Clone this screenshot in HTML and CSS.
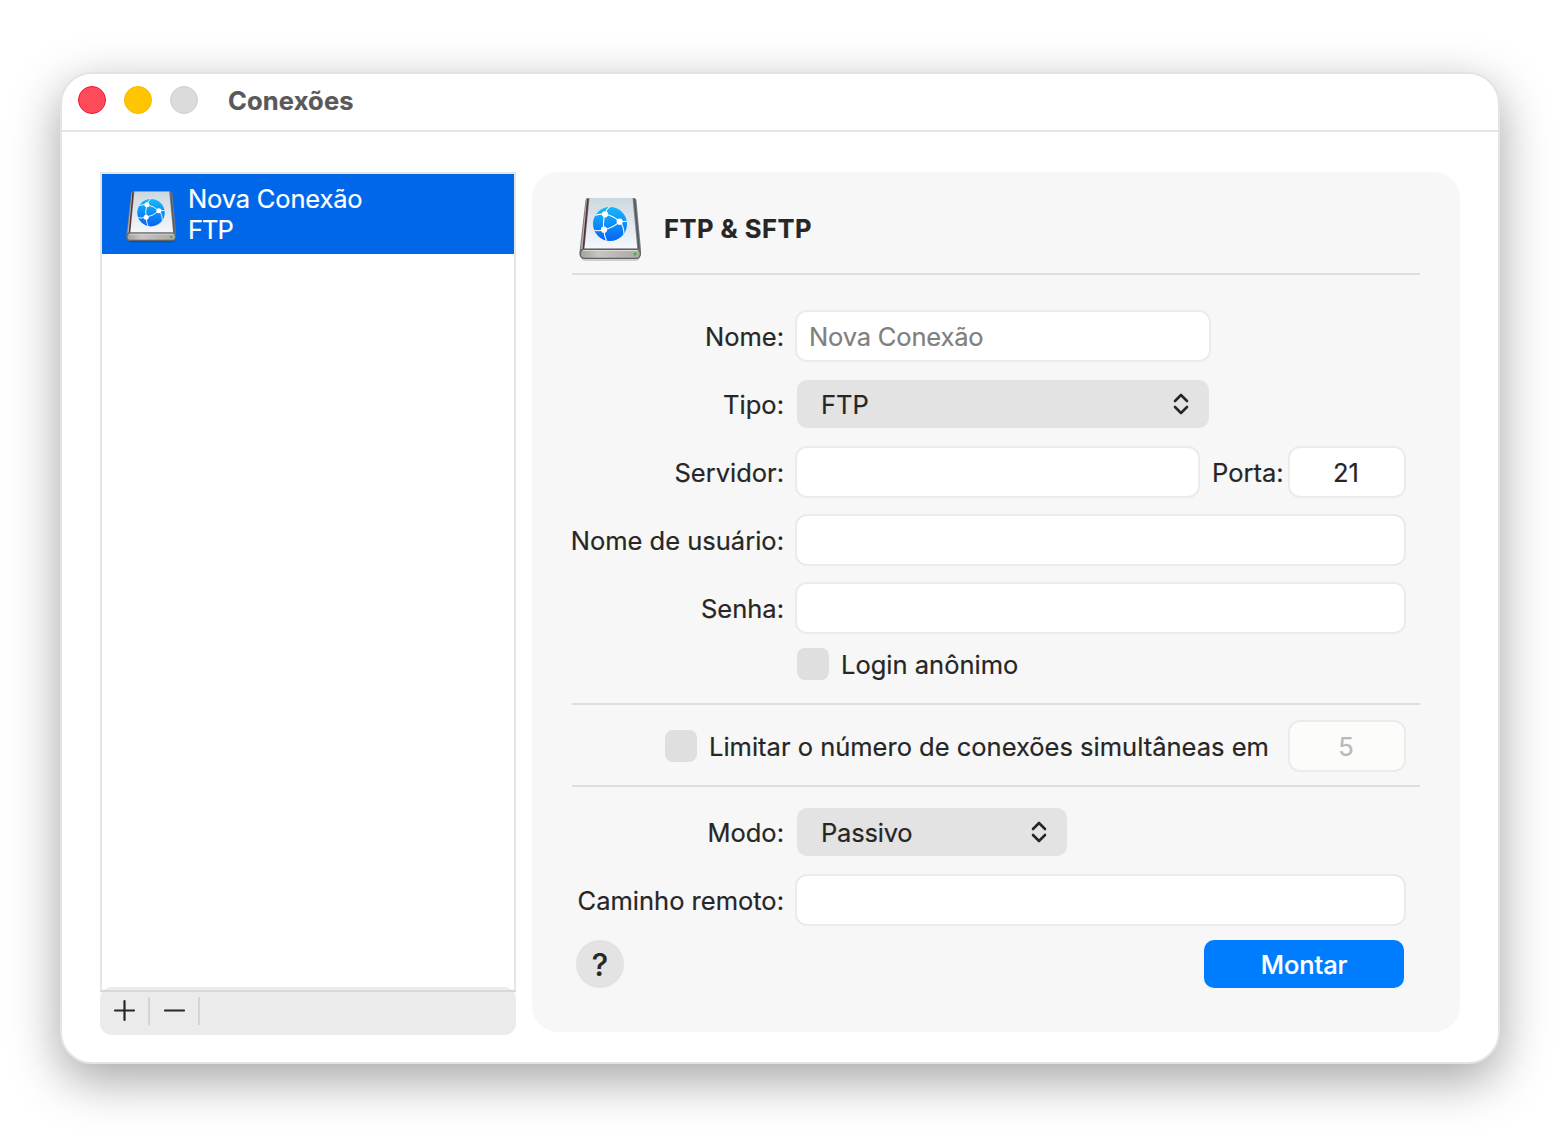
FILE: index.html
```html
<!DOCTYPE html>
<html lang="pt-BR">
<head>
<meta charset="utf-8">
<title>Conexões</title>
<link rel="stylesheet" href="styles.css">
</head>
<body>
<svg class="defs" width="0" height="0" aria-hidden="true">
  <defs>
    <linearGradient id="top" x1="0" y1="0" x2="0" y2="1"><stop offset="0" stop-color="#ccd8df"/><stop offset=".55" stop-color="#e2e9f0"/><stop offset="1" stop-color="#f4f7fb"/></linearGradient>
    <linearGradient id="front" x1="0" y1="0" x2="1" y2="0"><stop offset="0" stop-color="#a3a09d"/><stop offset=".3" stop-color="#c9c5c1"/><stop offset="1" stop-color="#aaa7a4"/></linearGradient>
    <linearGradient id="sea" x1="0" y1="0" x2="0" y2="1"><stop offset="0" stop-color="#16b8fb"/><stop offset="1" stop-color="#0465f4"/></linearGradient>
    <clipPath id="globe"><circle cx="32" cy="28" r="17"/></clipPath>
    <symbol id="disk" viewBox="0 0 64 68">
      <path d="M3 61Q3 65 8 65H57Q62 65 62 61Z" fill="#000" opacity=".16"/>
      <path d="M9.500 2H56Q58 2 58.400 4L63 54Q63 63 58 63H6Q1.500 63 1.500 56L7.500 4Q7.800 2 9.500 2Z" fill="#777c80"/>
      <path d="M8.300 3L3 53L5 53L9.500 3Z" fill="#b8b4b4"/>
      <path d="M9.800 3L5.300 53" stroke="#5b3037" stroke-width="1.600"/>
      <path d="M56.500 3L61 53" stroke="#4f565b" stroke-width="1.300"/>
      <path d="M11.500 2H54.500L59.300 52.500H6.500Z" fill="url(#top)"/>
      <rect x="2.300" y="53.300" width="60" height="9" rx="4" fill="url(#front)" stroke="#5e6265" stroke-width="1.300"/>
      <path d="M5 54.600H60" stroke="#e1dfdc" stroke-width=".9"/>
      <circle cx="57" cy="58" r="1.500" fill="#25c42c"/>
      <circle cx="32" cy="28" r="17" fill="url(#sea)"/>
      <g clip-path="url(#globe)" fill="none" stroke="#fff" stroke-width="1.100">
        <path d="M15 20Q21 17.500 27 18.300Q36 20 41.700 25.700Q46 29 46 39"/>
        <path d="M27 18.300Q28 13 33 10M27 18.300Q24.500 26 26 33.700Q26 40 29 46"/>
        <path d="M50 25.200L41.700 25.700Q35 32 26 33.700Q20 35.500 14 34"/>
      </g>
      <g fill="#fff"><circle cx="27" cy="18.300" r="3.100"/><circle cx="41.700" cy="25.700" r="3.100"/><circle cx="26" cy="33.700" r="3.100"/></g>
    </symbol>
    <symbol id="updown" viewBox="0 0 16 22"><path d="M2 8L8 2L14 8M2 14L8 20L14 14" fill="none" stroke="#262626" stroke-width="2.600" stroke-linecap="round" stroke-linejoin="round"/></symbol>
  </defs>
</svg>
<main class="window">
  <header class="titlebar">
    <span class="light close"></span><span class="light minimize"></span><span class="light zoom"></span>
    <h1 class="title">Conexões</h1>
  </header>
  <div class="content">
    <aside class="sidebar">
      <div class="list">
        <div class="item">
          <svg class="item-icon"><use href="#disk"/></svg>
          <div class="item-text"><div class="item-name">Nova Conexão</div><div class="item-kind">FTP</div></div>
        </div>
      </div>
      <div class="toolbar">
        <button class="tool" aria-label="Adicionar"><svg width="22" height="22" viewBox="0 0 22 22"><path d="M1.500 11H20.500M11 1.500V20.500" stroke="#262626" stroke-width="2.200" stroke-linecap="round"/></svg></button>
        <button class="tool" aria-label="Remover"><svg width="22" height="22" viewBox="0 0 22 22"><path d="M1.500 11H20.500" stroke="#262626" stroke-width="2.200" stroke-linecap="round"/></svg></button>
      </div>
    </aside>
    <section class="panel">
      <div class="panel-head"><svg class="panel-icon"><use href="#disk"/></svg><h2 class="panel-title">FTP &amp; SFTP</h2></div>
      <div class="group account">
        <div class="row"><label class="label">Nome:</label><input class="field name" placeholder="Nova Conexão"></div>
        <div class="row"><label class="label">Tipo:</label><div class="select type"><span>FTP</span><svg class="arrows"><use href="#updown"/></svg></div></div>
        <div class="row"><label class="label">Servidor:</label><input class="field server"><label class="port-label">Porta:</label><input class="field number" value="21"></div>
        <div class="row"><label class="label">Nome de usuário:</label><input class="field wide"></div>
        <div class="row"><label class="label">Senha:</label><input class="field wide"></div>
        <div class="anon"><span class="check"></span><span class="anon-text">Login anônimo</span></div>
      </div>
      <div class="group limit"><span class="check"></span><span class="limit-text">Limitar o número de conexões simultâneas em</span><input class="field number" value="5" disabled></div>
      <div class="mode">
        <div class="row"><label class="label">Modo:</label><div class="select passive"><span class="mode-value">Passivo</span><svg class="arrows"><use href="#updown"/></svg></div></div>
        <div class="row"><label class="label">Caminho remoto:</label><input class="field wide"></div>
      </div>
      <footer class="actions"><button class="help">?</button><button class="mount">Montar</button></footer>
    </section>
  </div>
</main>
</body>
</html>
```
FILE: styles.css
```css
* { box-sizing: border-box; }
body { margin: 0; width: 1560px; height: 1144px; padding: 72px 60px; background: #fff; overflow: hidden; font: 25.500px/32px Inter, "Liberation Sans", sans-serif; color: #262626; -webkit-text-stroke: .2px currentColor; }
button, input { font: inherit; letter-spacing: inherit; color: inherit; border: 0; padding: 0; margin: 0; }
.defs { position: absolute; }
.window { width: 1440px; height: 992px; border: 2px solid #e4e4e4; border-radius: 32px; background: #fff; box-shadow: 0 16px 50px rgba(0, 0, 0, .36); }
.titlebar { height: 58px; border-bottom: 2px solid #e5e5e5; display: flex; align-items: center; gap: 18px; padding: 0 0 2px 16px; }
.light { width: 28px; height: 28px; border-radius: 50%; border: 1px solid; margin-top: -3px; }
.close { background: #ff4b59; border-color: #f01530; }
.minimize { background: #ffc502; border-color: #f5ba00; }
.zoom { background: #dbdbdb; border-color: #d0d0d0; }
.title { margin: 0 0 0 12px; font-size: 25.500px; line-height: 32px; font-weight: 700; color: #595959; letter-spacing: .15px; }
.content { display: flex; gap: 16px; padding: 40px 38px 0; }
.sidebar { width: 416px; height: 863px; display: flex; flex-direction: column; }
.list { height: 820px; flex: none; border: 2px solid #e5e5e5; border-bottom-color: #d5d5d5; }
.item { height: 80px; display: flex; background: #0067e9; color: #fff; padding: 10px 0 0 24px; gap: 10px; }
.item-icon { width: 52px; height: 55px; margin: 6px 1px 0 -1px; }
.item-text { line-height: 30px; }
.item-name { letter-spacing: -.17px; }
.item-kind { letter-spacing: -1px; padding-top: 1px; }
.toolbar { height: 48px; flex: none; margin-top: -5px; border-radius: 12px; background: linear-gradient(#d8d8d8, #d8d8d8) 0 3px / 100% 2px no-repeat #ebebeb; display: flex; padding-top: 10px; z-index: 1; }
.tool { width: 50px; height: 28px; background: none; border-right: 2px solid #d4d4d4; display: flex; align-items: center; justify-content: center; }
.tool svg { transform: translate(.5px, -.5px); }
.panel { width: 928px; height: 860px; border-radius: 26px; background: #f7f7f7; padding: 0 40px; }
.panel-head { height: 103px; border-bottom: 2px solid #dedede; display: flex; align-items: center; gap: 22px; padding: 13px 0 0 6px; }
.panel-icon { width: 64px; height: 68px; margin-top: 2px; }
.panel-title { margin: 0; font-size: 25.500px; line-height: 32px; font-weight: 700; letter-spacing: .5px; }
.group { border-bottom: 2px solid #dedede; }
.account { padding-top: 27px; height: 430px; }
.row { height: 68px; display: flex; align-items: center; }
.label { width: 212px; margin-right: 11px; display: flex; justify-content: flex-end; white-space: nowrap; padding-top: 1px; }
.field { height: 52px; border: 2px solid #ebebeb; border-radius: 12px; background: #fff; padding: 0 12px; flex: none; }
.field::placeholder { color: #808080; opacity: 1; letter-spacing: -.17px; }
.name { width: 416px; }
.server { width: 405px; }
.number { width: 118px; text-align: center; padding: 0 14px 0 12px; }
.wide { width: 611px; }
.field:disabled { background: #fcfcfb; color: #b9b9b9; }
.port-label { width: 88px; padding: 1px 0 0 12px; white-space: nowrap; }
.select { height: 48px; margin-left: 2px; border-radius: 10px; background: #e3e3e3; display: flex; align-items: center; justify-content: space-between; padding: 1px 20px 0 24px; }
.type { width: 412px; }
.passive { width: 270px; }
.mode-value { letter-spacing: -.2px; }
.arrows { width: 16px; height: 22px; margin-top: -1px; }
.anon { display: flex; align-items: center; gap: 12px; padding: 6px 0 0 225px; }
.check { width: 32px; height: 32px; border-radius: 8px; background: #dfdfdf; flex: none; }
.anon-text, .limit-text { white-space: nowrap; padding-top: 1px; }
.anon .check { margin-top: -1px; }
.limit { height: 82px; display: flex; align-items: center; gap: 12px; padding: 2px 14px 0 93px; }
.limit .number { margin-left: auto; }
.mode { padding-top: 11px; }
.actions { display: flex; justify-content: space-between; padding: 6px 16px 0 4px; }
.help { width: 48px; height: 48px; border-radius: 50%; background: #e3e3e3; font-size: 31px; font-weight: 500; padding-top: 2px; }
.mount { width: 200px; height: 48px; border-radius: 10px; background: #007dff; color: #fff; font-weight: 500; letter-spacing: -.1px; padding-top: 1px; }
```
